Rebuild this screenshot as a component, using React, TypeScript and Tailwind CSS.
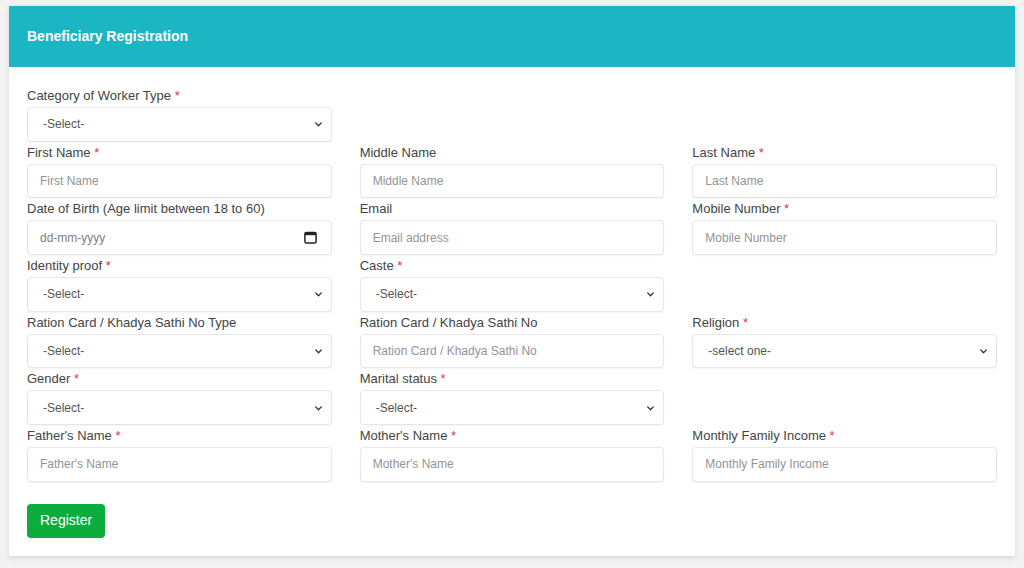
const Star = () => <span className="text-[#e0344f]"> *</span>

const Chevron = () => (
  <svg className="pointer-events-none absolute right-[9px] top-1/2 -translate-y-1/2" width="9" height="9" viewBox="0 0 16 16" fill="none">
    <path d="M3 6l5 5 5-5" stroke="#333" strokeWidth="2.4" strokeLinecap="round" strokeLinejoin="round" />
  </svg>
)

const Label = ({ text, req }: { text: string; req?: boolean }) => (
  <label className="block h-[22px] leading-[22px] text-[13px] text-[#444]">
    {text}
    {req && <Star />}
  </label>
)

const boxCls =
  "h-[34.7px] w-full rounded-[4px] border border-[#e6e6e6] bg-white shadow-[0_1px_2px_rgba(0,0,0,0.05)] text-[12px] outline-none"

const TextField = ({ label, req, ph }: { label: string; req?: boolean; ph: string }) => (
  <div>
    <Label text={label} req={req} />
    <input className={`${boxCls} px-3 text-[#444] placeholder:text-[#949494]`} placeholder={ph} />
  </div>
)

const SelectField = ({ label, req, first = "-Select-" }: { label: string; req?: boolean; first?: string }) => (
  <div>
    <Label text={label} req={req} />
    <div className="relative">
      <select className={`${boxCls} appearance-none pl-[15px] pr-8 text-[#555]`} defaultValue="">
        <option value="">{first}</option>
      </select>
      <Chevron />
    </div>
  </div>
)

const DateField = () => (
  <div>
    <Label text="Date of Birth (Age limit between 18 to 60)" />
    <div className={`${boxCls} flex items-center justify-between pl-3 pr-[14px] text-[#808080]`}>
      <span>dd-mm-yyyy</span>
      <svg width="13" height="13" viewBox="0 0 14 14" fill="none">
        <rect x="1" y="1.5" width="12" height="11.5" rx="1.5" stroke="#222" strokeWidth="1.6" />
        <rect x="1" y="1.5" width="12" height="3" fill="#222" />
      </svg>
    </div>
  </div>
)

export default function App() {
  return (
    <div className="min-h-screen bg-[#f3f3f3] px-[9px] pt-[6px] font-['Liberation_Sans',Arial,sans-serif]">
      <div className="w-full bg-white shadow-[0_2px_6px_rgba(0,0,0,0.12)]">
        <div className="flex h-[61px] items-center bg-[#1bb5c4] px-[18px]">
          <h1 className="text-[14px] font-bold text-white">Beneficiary Registration</h1>
        </div>
        <div className="px-[18px] pt-[18px] pb-[18px]">
          <div className="grid grid-cols-3 gap-x-[28px]">
            <SelectField label="Category of Worker Type" req />
            <div />
            <div />

            <TextField label="First Name" req ph="First Name" />
            <TextField label="Middle Name" ph="Middle Name" />
            <TextField label="Last Name" req ph="Last Name" />

            <DateField />
            <TextField label="Email" ph="Email address" />
            <TextField label="Mobile Number" req ph="Mobile Number" />

            <SelectField label="Identity proof" req />
            <SelectField label="Caste" req />
            <div />

            <SelectField label="Ration Card / Khadya Sathi No Type" />
            <TextField label="Ration Card / Khadya Sathi No" ph="Ration Card / Khadya Sathi No" />
            <SelectField label="Religion" req first="-select one-" />

            <SelectField label="Gender" req />
            <SelectField label="Marital status" req />
            <div />

            <TextField label="Father's Name" req ph="Father's Name" />
            <TextField label="Mother's Name" req ph="Mother's Name" />
            <TextField label="Monthly Family Income" req ph="Monthly Family Income" />
          </div>
          <button className="mt-[22px] h-[34px] rounded-[4px] bg-[#0bae3d] px-[13px] text-[14px] text-white">
            Register
          </button>
        </div>
      </div>
    </div>
  )
}
